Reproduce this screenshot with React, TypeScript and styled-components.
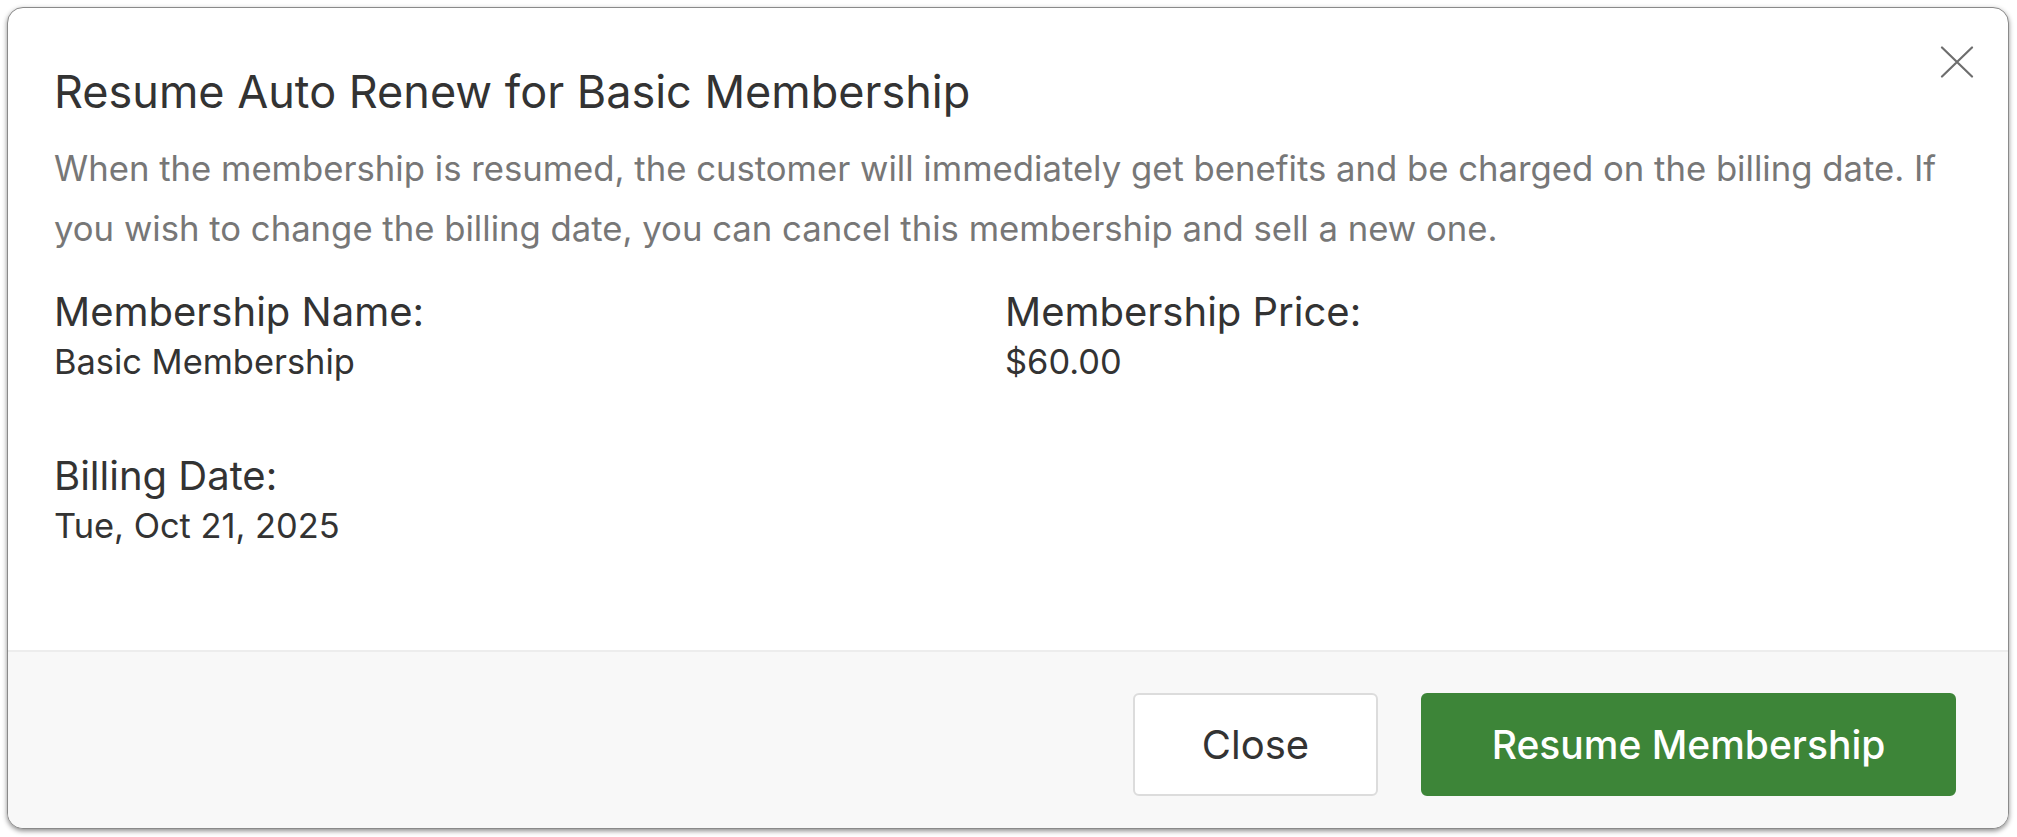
import React from "react";
import styled, { createGlobalStyle } from "styled-components";

const GlobalStyle = createGlobalStyle`
  html, body { margin: 0; padding: 0; background: #ffffff; }
  body { font-family: "Inter", "Liberation Sans", sans-serif; }
  * { box-sizing: border-box; }
`;

const Page = styled.div`
  width: 2017px;
  height: 837px;
  padding: 7px 8px 8px 7px;
  background: #ffffff;
`;

const Modal = styled.div`
  position: relative;
  width: 100%;
  height: 100%;
  display: flex;
  flex-direction: column;
  background: #ffffff;
  border: 1px solid #8a8a8a;
  border-radius: 16px;
  box-shadow: 0 2px 5px rgba(0, 0, 0, 0.45);
  overflow: hidden;
`;

const Body = styled.div`
  flex: 1;
  padding: 56px 46px 0 46px;
  display: flex;
  flex-direction: column;
`;

const Title = styled.h2`
  margin: 0;
  font-size: 45px;
  line-height: 56px;
  font-weight: 400;
  color: #333333;
`;

const Description = styled.p`
  margin: 18px 0 0 0;
  font-size: 34.7px;
  line-height: 60px;
  color: #777777;
  max-width: 1910px;
`;

const Details = styled.div`
  margin-top: 29px;
  display: grid;
  grid-template-columns: 951px 1fr;
  row-gap: 64px;
`;

const Field = styled.div`
  display: flex;
  flex-direction: column;
`;

const Label = styled.div`
  font-size: 40px;
  line-height: 50px;
  color: #333333;
`;

const Value = styled.div`
  font-size: 34.4px;
  line-height: 50px;
  color: #333333;
`;

const CloseIcon = styled.button`
  position: absolute;
  top: 31px;
  right: 28px;
  width: 46px;
  height: 46px;
  padding: 0;
  border: none;
  background: transparent;
  display: flex;
  align-items: center;
  justify-content: center;
  cursor: pointer;
  color: #6e6e6e;
`;

const Footer = styled.div`
  height: 178px;
  background: #f8f8f8;
  border-top: 2px solid #ededed;
  display: flex;
  justify-content: flex-end;
  align-items: flex-start;
  gap: 43px;
  padding: 41px 52px 0 0;
`;

const Button = styled.button<{ $primary?: boolean }>`
  height: 103px;
  padding: 0 60px;
  min-width: ${(p) => (p.$primary ? "535px" : "245px")};
  border-radius: 6px;
  font-family: "Inter", "Liberation Sans", sans-serif;
  font-size: ${(p) => (p.$primary ? "39px" : "40px")};
  font-weight: ${(p) => (p.$primary ? 500 : 400)};
  color: ${(p) => (p.$primary ? "#ffffff" : "#333333")};
  background: ${(p) => (p.$primary ? "#3d8538" : "#ffffff")};
  border: 2px solid ${(p) => (p.$primary ? "#3d8538" : "#dcdcdc")};
  cursor: pointer;
`;

export default function App() {
  return (
    <>
      <GlobalStyle />
      <Page>
        <Modal>
          <CloseIcon aria-label="Close">
            <svg width="34" height="32" viewBox="0 0 34 32" fill="none">
              <path d="M2 1.5 L32 30.5 M32 1.5 L2 30.5" stroke="currentColor" strokeWidth="2.2" strokeLinecap="round" />
            </svg>
          </CloseIcon>
          <Body>
            <Title>Resume Auto Renew for Basic Membership</Title>
            <Description>
              When the membership is resumed, the customer will immediately get benefits and be charged on the
              billing date. If you wish to change the billing date, you can cancel this membership and sell a new one.
            </Description>
            <Details>
              <Field>
                <Label>Membership Name:</Label>
                <Value>Basic Membership</Value>
              </Field>
              <Field>
                <Label>Membership Price:</Label>
                <Value>$60.00</Value>
              </Field>
              <Field>
                <Label>Billing Date:</Label>
                <Value>Tue, Oct 21, 2025</Value>
              </Field>
            </Details>
          </Body>
          <Footer>
            <Button>Close</Button>
            <Button $primary>Resume Membership</Button>
          </Footer>
        </Modal>
      </Page>
    </>
  );
}
